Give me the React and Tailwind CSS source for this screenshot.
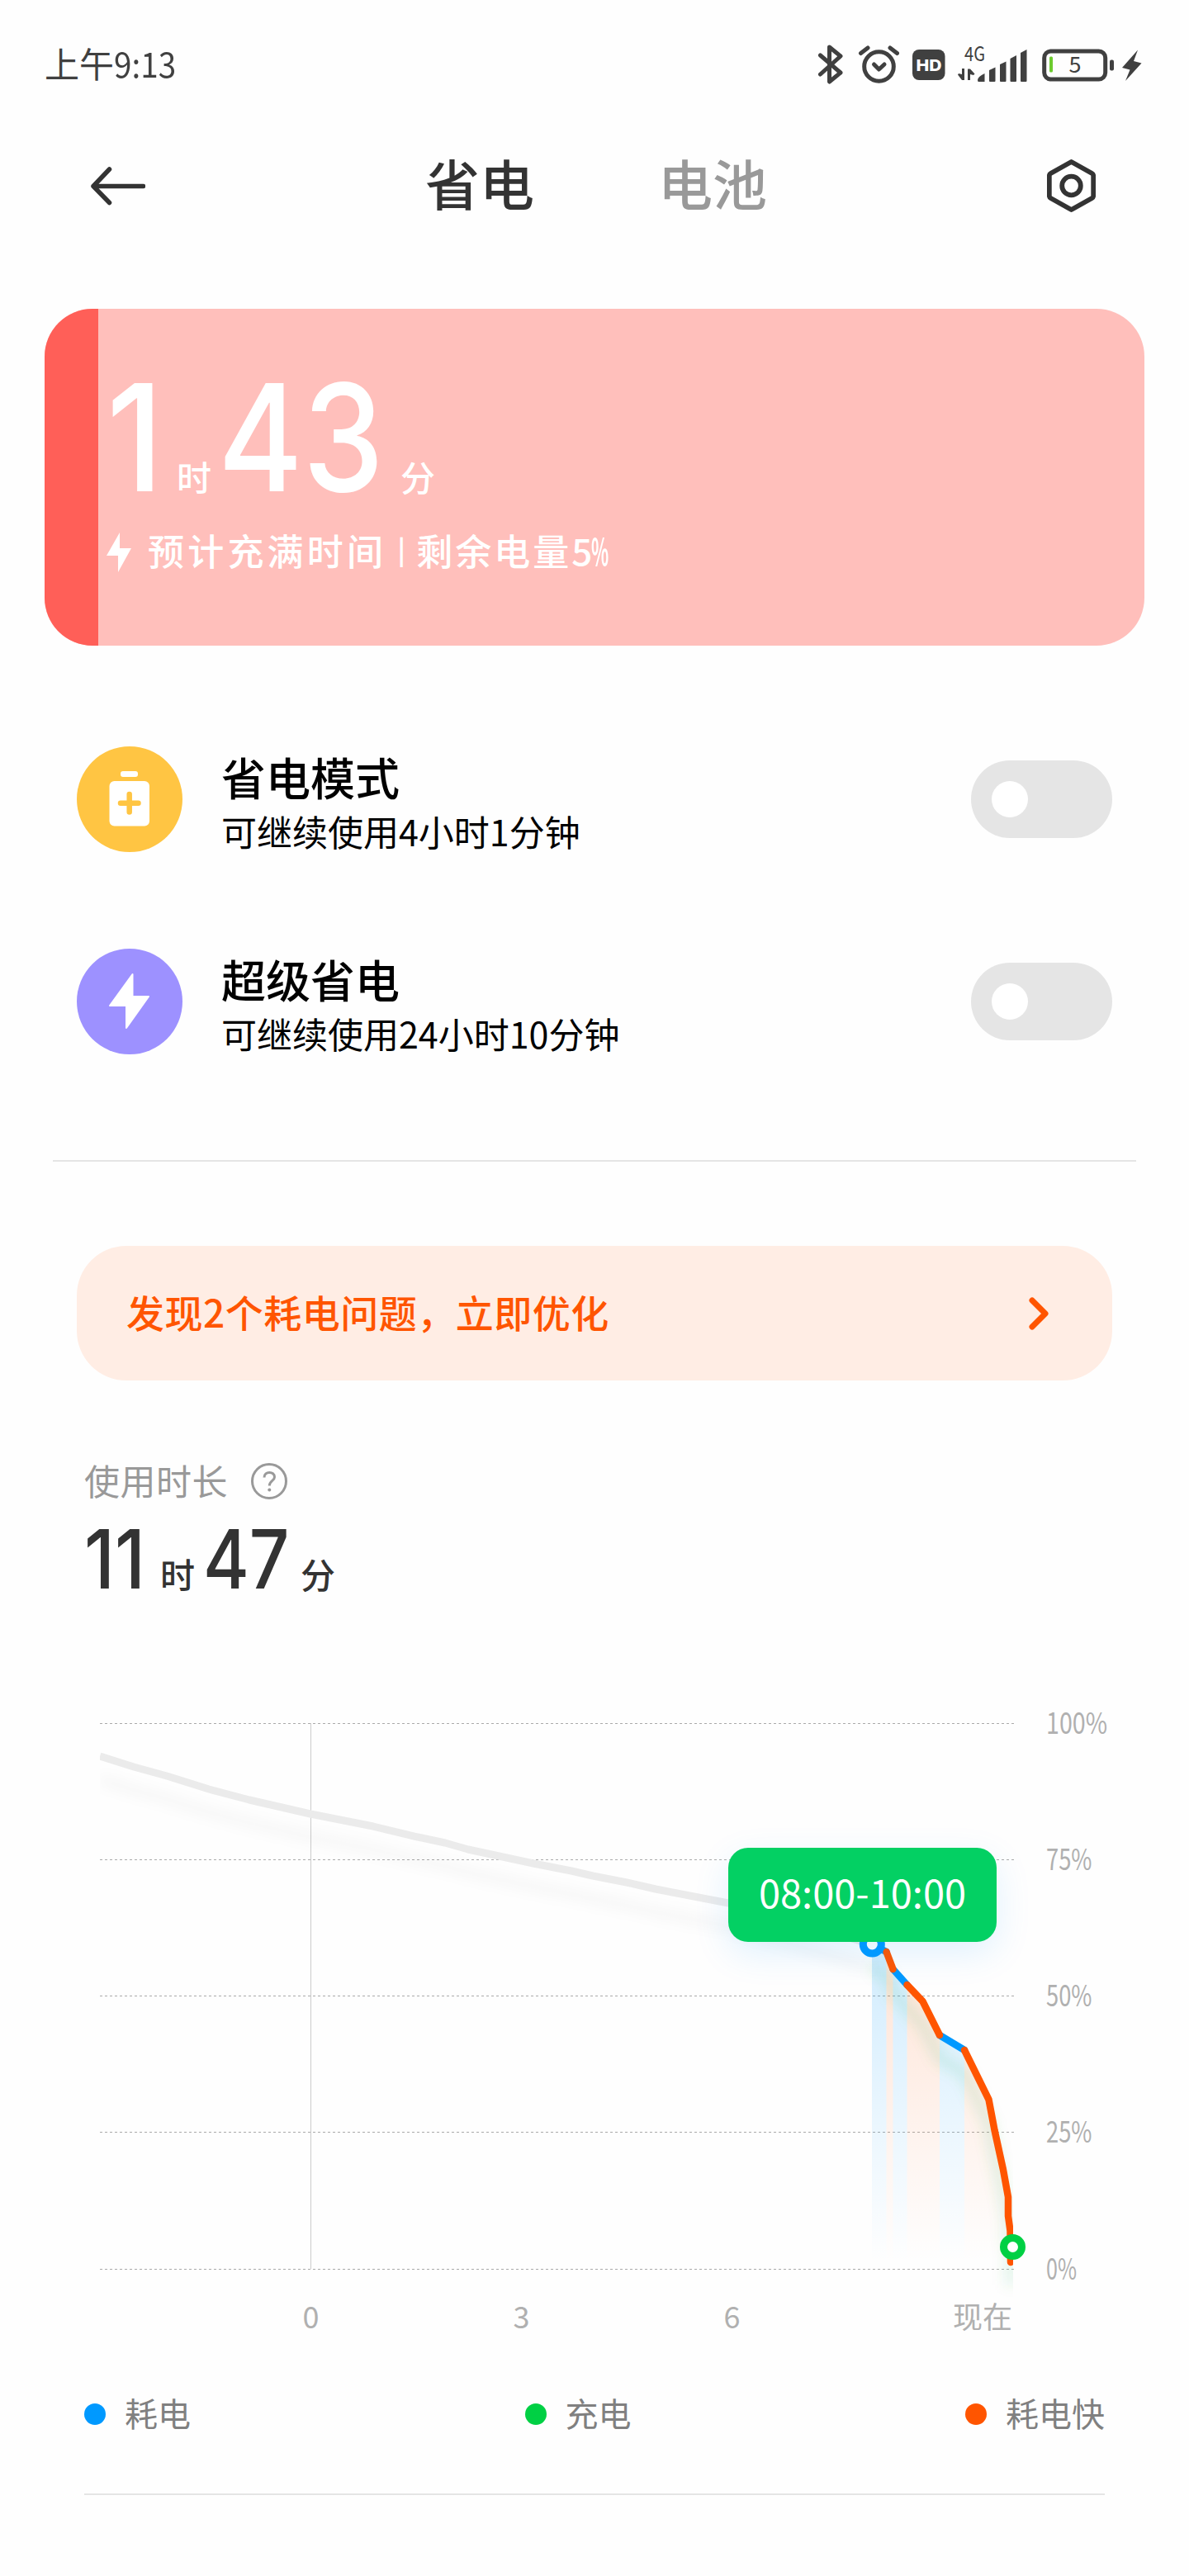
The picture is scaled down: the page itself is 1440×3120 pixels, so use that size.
import React, { useState } from 'react';

const CJK = "font-['Noto_Sans_CJK_SC',sans-serif]";
const DIGITS = "font-['Inter','Noto_Sans_CJK_SC',sans-serif]";

const modes = [
    {
        id: 'saver',
        title: '省电模式',
        detail: '可继续使用4小时1分钟',
        color: 'bg-[#ffc543]',
        icon: 'battery'
    },
    {
        id: 'super',
        title: '超级省电',
        detail: '可继续使用24小时10分钟',
        color: 'bg-[#9d91ff]',
        icon: 'bolt'
    }
];

const legend = [
    { label: '耗电', color: 'bg-[#0099ff]' },
    { label: '充电', color: 'bg-[#00d044]' },
    { label: '耗电快', color: 'bg-[#ff5500]' }
];

const levels = [
    { label: '100%', y: 37.5 },
    { label: '75%', y: 202.5 },
    { label: '50%', y: 367.5 },
    { label: '25%', y: 532.5 },
    { label: '0%', y: 698.5 }
];

const hours = [
    { label: '0', x: 376.5 },
    { label: '3', x: 631.5 },
    { label: '6', x: 886.5 }
];

const history =
    '121,77 162,90 202,101 253,117 302,130 376,147 452,162 506,175 539,182 567,190 646,207 692,216 718,222 759,230 794,238 882,255 980,283 1056,305';

// usage from 08:00 on, cut where the drain rate changes
const segments = [
    { color: '#0099ff', fill: 'url(#blueFill)', points: [[1056, 305], [1073.5, 314]] },
    { color: '#ff5500', fill: 'url(#orangeFill)', points: [[1073.5, 314], [1081.5, 335]] },
    { color: '#0099ff', fill: 'url(#blueFill)', points: [[1081.5, 335], [1098.5, 354]] },
    { color: '#ff5500', fill: 'url(#orangeFill)', points: [[1098.5, 354], [1117.5, 374], [1138, 415]] },
    { color: '#0099ff', fill: 'url(#blueFill)', points: [[1138, 415], [1168, 433]] },
    {
        color: '#ff5500',
        fill: 'url(#orangeFill)',
        points: [[1168, 433], [1197.5, 493], [1204.5, 530], [1215, 578], [1221, 611], [1221, 634], [1223.5, 652], [1224, 690]]
    }
];

const toPoints = (points) => points.map((p) => p.join(',')).join(' ');

const toArea = (points) => {
    const first = points[0];
    const last = points[points.length - 1];
    return `${first[0]},695 ${toPoints(points)} ${last[0]},695`;
};

function StatusBar() {
    return (
        <div className="flex h-[156px] items-center justify-between pl-[54px] pr-[57px] text-[#404040]">
            <span className="pb-1 text-[42px] leading-none">
                上午<span className="inline-block origin-left scale-x-[0.92]">9:13</span>
            </span>
            <div className="flex items-center">
                <svg width="30" height="48" viewBox="0 0 30 48" fill="none" stroke="currentColor" strokeWidth="5" strokeLinejoin="round" strokeLinecap="round">
                    <path d="M2.5 13 L27 34 L13.5 45 V3 L27 14 L2.5 36" />
                </svg>
                <svg className="ml-[18px]" width="50" height="48" viewBox="0 0 50 48" fill="none" stroke="currentColor" strokeLinecap="round">
                    <circle cx="25.5" cy="26.5" r="17.8" strokeWidth="5" />
                    <path d="M3.5 10.5 L12 4 M47.5 10.5 L39 4" strokeWidth="5" />
                    <path d="M19.5 24 L25.5 30 L32 24" strokeWidth="5" strokeLinejoin="round" />
                </svg>
                <svg className="ml-[16px]" width="40" height="48" viewBox="0 0 40 48">
                    <rect x="0" y="6" width="39.5" height="37" rx="8" fill="currentColor" />
                    <text x="20" y="31.5" textAnchor="middle" textLength="31" lengthAdjust="spacingAndGlyphs" fontSize="19" fontWeight="800" fill="#fff" className={DIGITS}>HD</text>
                </svg>
                <svg className="ml-[15px] overflow-visible" width="85" height="48" viewBox="0 0 85 48" fill="currentColor">
                    <text x="8" y="20" fontSize="24" textLength="25" lengthAdjust="spacingAndGlyphs" className={CJK}>4G</text>
                    <path d="M5 29 H8 V43 H5 L0 36.5 L1 35 L5 36 Z M12 43 H15 V36 L19 37 L20.5 35.5 L15 29.5 H12 Z" />
                    <path d="M24 43 Q24 39 32.5 35 V45 H25 Q24 45 24 43 Z" />
                    <path d="M38 31 L45.5 27.5 V44 Q45.5 45 44.5 45 H39 Q38 45 38 44 Z" />
                    <path d="M51 24 L58.5 20.5 V44 Q58.5 45 57.5 45 H52 Q51 45 51 44 Z" />
                    <path d="M63.5 17 L71 13 V44 Q71 45 70 45 H64.5 Q63.5 45 63.5 44 Z" />
                    <path d="M76 10 L83.5 6 V44 Q83.5 45 82.5 45 H77 Q76 45 76 44 Z" />
                </svg>
                <svg className="ml-[17px]" width="88" height="48" viewBox="0 0 88 48">
                    <rect x="2.7" y="8" width="74" height="34" rx="8" fill="none" stroke="currentColor" strokeWidth="5" />
                    <rect x="9" y="14.5" width="4" height="19" rx="1.5" fill="#6ccb2e" />
                    <text x="40" y="34" textAnchor="middle" fontSize="27" fill="currentColor" className={CJK}>5</text>
                    <rect x="82" y="18.5" width="5" height="13" rx="2" fill="currentColor" />
                </svg>
                <svg className="ml-[9px]" width="24" height="48" viewBox="0 0 24 48" fill="currentColor">
                    <path d="M19 6.5 L0 28 L9.5 30.5 L4 44 L23.5 22.5 L14 20 Z" />
                </svg>
            </div>
        </div>
    );
}

function Header() {
    return (
        <div className="flex h-[138px] items-center justify-between pl-[110px] pr-[113px] text-[#333]">
            <svg width="66" height="48" viewBox="0 0 66 48" fill="none" stroke="currentColor" strokeWidth="5.5" strokeLinecap="round" strokeLinejoin="round">
                <path d="M63.5 24.5 H3 M22.5 4 L3 24.5 L22.5 44.5" />
            </svg>
            <div className="flex gap-[150px] pb-[10px] text-[66px] font-medium leading-none">
                <span>省电</span>
                <span className="text-[#999]">电池</span>
            </div>
            <svg width="59" height="64" viewBox="0 0 59 64" fill="none" stroke="currentColor" strokeWidth="5.8" strokeLinejoin="round">
                <path d="M29.5 3 L54.5 17 Q56.2 18 56.2 20 V44 Q56.2 46 54.5 47 L29.5 61 L4.5 47 Q2.8 46 2.8 44 V20 Q2.8 18 4.5 17 Z" />
                <circle cx="29.5" cy="32" r="11.3" />
            </svg>
        </div>
    );
}

function ChargeCard() {
    return (
        <div className="mx-[54px] mt-20 flex h-[408px] overflow-hidden rounded-[58px] bg-[#ffbfbb] text-white">
            <div className="w-[65px] shrink-0 bg-[#ff5f58]" />
            <div className="flex flex-col pl-2.5 pt-[65px]">
                <div className="flex h-[158px] items-baseline">
                    <span className={`${DIGITS} w-[81px] origin-left scale-x-[0.92] text-[180px] font-medium leading-[182px]`}>1</span>
                    <span className="w-[54px] pl-1 text-[42px] font-medium">时</span>
                    <span className={`${DIGITS} w-[217px] origin-left scale-x-[0.87] text-[180px] font-medium leading-[182px]`}>43</span>
                    <span className="pl-1 text-[42px] font-medium">分</span>
                </div>
                <div className="mt-[46px] flex h-[52px] items-center">
                    <svg width="30" height="48" viewBox="0 0 30 48" fill="currentColor">
                        <path d="M16 0 V19 H30 L14 48 V28 H0 Z" />
                    </svg>
                    <div className="ml-5 flex items-center whitespace-nowrap pb-1.5 text-[44px] font-medium leading-none">
                        <span className="tracking-[4.2px]">预计充满时间</span>
                        <span className="w-[36px] pb-1 text-center text-[32px] font-bold">|</span>
                        <span className="tracking-[3px]">剩余电量</span>
                        <span className="w-[24px]">5</span>
                        <span className="w-[20px] origin-left scale-x-50 font-bold">%</span>
                    </div>
                </div>
            </div>
        </div>
    );
}

function ModeIcon({ name }) {
    if (name === 'battery') {
        return (
            <svg width="128" height="128" viewBox="0 0 128 128" fill="#fff">
                <rect x="53" y="30" width="21" height="7" rx="3" />
                <rect x="39.5" y="42" width="48.5" height="54.5" rx="6" />
                <path d="M63.7 58 V79.500 M53 68.700 H74.500" stroke="#ffc543" strokeWidth="6.5" strokeLinecap="round" />
            </svg>
        );
    }
    return (
        <svg width="128" height="128" viewBox="0 0 128 128" fill="#fff" stroke="#fff" strokeWidth="2" strokeLinejoin="round">
            <path d="M67.5 31 V58 H87 L60 96 V69 H40 Z" />
        </svg>
    );
}

function ModeRow({ mode }) {
    const [enabled, setEnabled] = useState(false);
    return (
        <div className="flex h-32 items-center">
            <div className={`h-32 w-32 rounded-full ${mode.color}`}>
                <ModeIcon name={mode.icon} />
            </div>
            <div className="ml-[47px] flex-1 pt-2 text-black">
                <div className="text-[54px] font-medium leading-[66px]">{mode.title}</div>
                <div className="mt-0.5 text-[43px] leading-[60px]">{mode.detail}</div>
            </div>
            <button
                role="switch"
                aria-checked={enabled}
                aria-label={mode.title}
                onClick={() => setEnabled(!enabled)}
                className={`flex h-[94px] w-[171px] items-center rounded-full px-[25px] ${
                    enabled ? 'justify-end bg-[#0099ff]' : 'justify-start bg-[#e5e5e5]'
                }`}
            >
                <span className="h-11 w-11 rounded-full bg-white" />
            </button>
        </div>
    );
}

function UsageTime() {
    return (
        <div className="mt-[100px] px-[102px]">
            <div className="flex h-11 items-center text-[#999]">
                <span className="w-[172px] whitespace-nowrap pb-1 text-[43px] leading-none tracking-[0.5px]">使用时长</span>
                <svg className="ml-[30px]" width="44" height="44" viewBox="0 0 44 44" fill="none" stroke="currentColor">
                    <circle cx="22" cy="22" r="20.5" strokeWidth="3" />
                    <path d="M16 17.5 C16 9.5 28.5 9.5 28.5 17 C28.5 21.5 22.3 21.5 22.3 27.5" strokeWidth="3" />
                    <circle cx="22.3" cy="32.5" r="2" fill="currentColor" stroke="none" />
                </svg>
            </div>
            <div className="mt-[17px] flex h-[115px] items-baseline text-[#333]">
                <span className={`${DIGITS} w-[90px] origin-left scale-x-[0.9] text-[99px] font-medium leading-[110px]`}>11</span>
                <span className="w-[54px] pl-0.5 text-[42px] font-medium">时</span>
                <span className={`${DIGITS} w-[116px] origin-left scale-x-[0.86] text-[99px] font-medium leading-[110px]`}>47</span>
                <span className="pl-0.5 text-[42px] font-medium">分</span>
            </div>
        </div>
    );
}

function BatteryChart() {
    return (
        <div className="relative mt-[102px] h-[790px]">
            <svg className="block" width="1440" height="790" viewBox="0 0 1440 790">
                <defs>
                    <linearGradient id="blueFill" gradientUnits="userSpaceOnUse" x1="0" y1="300" x2="0" y2="690">
                        <stop offset="0" stopColor="#0099ff" stopOpacity="0.18" />
                        <stop offset="1" stopColor="#0099ff" stopOpacity="0" />
                    </linearGradient>
                    <linearGradient id="orangeFill" gradientUnits="userSpaceOnUse" x1="0" y1="300" x2="0" y2="690">
                        <stop offset="0" stopColor="#ff5500" stopOpacity="0.16" />
                        <stop offset="1" stopColor="#ff5500" stopOpacity="0" />
                    </linearGradient>
                    <filter id="soft" filterUnits="userSpaceOnUse" x="80" y="40" width="1200" height="750">
                        <feGaussianBlur stdDeviation="8" />
                    </filter>
                    <clipPath id="plot">
                        <rect x="121" y="0" width="1106" height="790" />
                    </clipPath>
                </defs>

                {/* Grid */}
                {levels.map((level) => (
                    <line key={level.label} x1="121" x2="1229" y1={level.y} y2={level.y} stroke="#aaa" strokeWidth="1" strokeDasharray="3 3" />
                ))}
                <line x1="376.5" x2="376.5" y1="37" y2="698" stroke="#ccc" strokeWidth="1" />

                <g clipPath="url(#plot)">
                    {segments.map((s, i) => (
                        <polygon key={i} points={toArea(s.points)} fill={s.fill} />
                    ))}
                    {/* Shadows under the lines */}
                    <polyline points={history} transform="translate(0 28)" fill="none" stroke="#000" strokeOpacity="0.035" strokeWidth="11" filter="url(#soft)" />
                    <polyline
                        points={segments.map((s) => toPoints(s.points)).join(' ')}
                        transform="translate(0 28)"
                        fill="none"
                        stroke="#00a040"
                        strokeOpacity="0.13"
                        strokeWidth="12"
                        filter="url(#soft)"
                    />
                    <polyline points={history} fill="none" stroke="#ebebeb" strokeWidth="9" strokeLinejoin="round" />
                    {['#0099ff', '#ff5500'].map((color) =>
                        segments
                            .filter((s) => s.color === color)
                            .map((s) => (
                                <polyline key={s.points[0][0]} points={toPoints(s.points)} fill="none" stroke={color} strokeWidth="8.5" strokeLinejoin="round" strokeLinecap="round" />
                            ))
                    )}
                </g>
                <circle cx="1056.3" cy="305" r="11" fill="#fff" stroke="#0099ff" strokeWidth="9" />
                <circle cx="1226.5" cy="671.5" r="11" fill="#fff" stroke="#00d044" strokeWidth="9" />

                {/* Axis labels */}
                <g fill="#b0b0b0" fontSize="36" className={CJK}>
                    {levels.map((level) => (
                        <text key={level.label} x="1267" y={level.y + 12.5} textLength={level.label.length * 18.5} lengthAdjust="spacingAndGlyphs">
                            {level.label}
                        </text>
                    ))}
                    {hours.map((hour) => (
                        <text key={hour.label} x={hour.x} y="770" textAnchor="middle">
                            {hour.label}
                        </text>
                    ))}
                    <text x="1154" y="770">现在</text>
                </g>
            </svg>
            <div className="absolute left-[882px] top-[188px] flex h-[114px] w-[325px] items-center justify-center rounded-3xl bg-[#03d063] text-[47px] leading-none text-white shadow-[0_14px_44px_rgba(0,150,255,0.12)]">
                <span className="whitespace-nowrap pb-2.5">08:00-10:00</span>
            </div>
        </div>
    );
}

export default function App() {
    return (
        <div className={`h-[3120px] w-[1440px] overflow-hidden bg-[#fefefe] ${CJK}`}>
            <StatusBar />
            <Header />
            <ChargeCard />
            <div className="mt-[122px] flex flex-col gap-[117px] px-[93px]">
                {modes.map((mode) => (
                    <ModeRow key={mode.id} mode={mode} />
                ))}
            </div>
            <div className="mx-16 mt-[128px] h-0.5 bg-[#e5e5e5]" />
            <div className="mx-[93px] mt-[102px] flex h-[163px] items-center justify-between rounded-[60px] bg-[#ffede4] pl-[60px] pr-[76px] text-[#ff5500]">
                <span className="pb-1.5 text-[46px] font-medium leading-none tracking-[0.5px]">发现2个耗电问题，立即优化</span>
                <svg width="26" height="40" viewBox="0 0 26 40" fill="none" stroke="currentColor" strokeWidth="7" strokeLinecap="round" strokeLinejoin="round">
                    <path d="M5 4 L21 20 L5 36" />
                </svg>
            </div>
            <UsageTime />
            <BatteryChart />
            <div className="mx-[102px] mt-[58px] flex h-[52px] items-center justify-between text-[40px] leading-none text-[#808080]">
                {legend.map((item) => (
                    <div key={item.label} className="flex items-center">
                        <span className={`h-[26px] w-[26px] rounded-full ${item.color}`} />
                        <span className="ml-[23px] pb-1">{item.label}</span>
                    </div>
                ))}
            </div>
            <div className="mx-[102px] mt-[70px] h-0.5 bg-[#e5e5e5]" />
        </div>
    );
}
